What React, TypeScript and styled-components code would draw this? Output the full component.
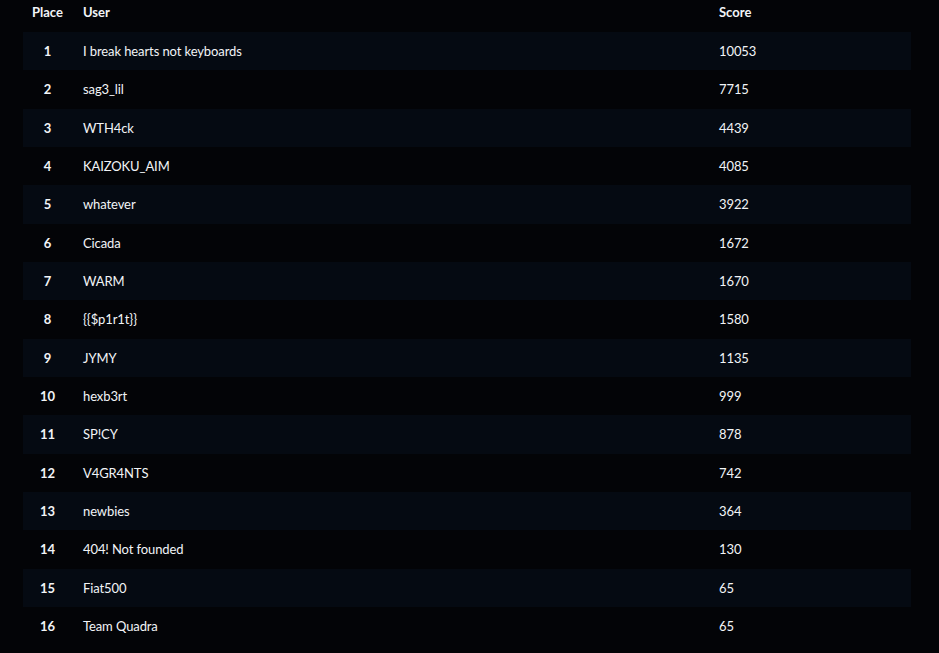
import React from "react";
import styled, { createGlobalStyle } from "styled-components";

const Global = createGlobalStyle`
  html, body { margin: 0; padding: 0; background: #030407; }
  body { font-family: Lato, "Open Sans", sans-serif; color: #f2f4f7; }
`;

const Page = styled.div`
  padding: 0 28px 0 23px;
`;

const Board = styled.div`
  display: grid;
  grid-template-columns: 49px 636px 203px;
  width: 888px;
`;

const HeadCell = styled.div<{ $center?: boolean }>`
  height: 32px;
  box-sizing: border-box;
  padding: 4px 0 0 ${(p) => (p.$center ? 0 : 11)}px;
  line-height: 16px;
  font-size: 13px;
  font-weight: 700;
  text-align: ${(p) => (p.$center ? "center" : "left")};
`;

const Cell = styled.div<{ $striped: boolean; $center?: boolean; $bold?: boolean }>`
  height: 38.33px;
  display: flex;
  align-items: center;
  justify-content: ${(p) => (p.$center ? "center" : "flex-start")};
  padding-left: ${(p) => (p.$center ? 0 : 11)}px;
  background: ${(p) => (p.$striped ? "#050a12" : "transparent")};
  font-size: 13px;
  letter-spacing: -0.1px;
  font-weight: ${(p) => (p.$bold ? 700 : 400)};
`;

const rows: [string, number][] = [
  ["I break hearts not keyboards", 10053],
  ["sag3_lil", 7715],
  ["WTH4ck", 4439],
  ["KAIZOKU_AIM", 4085],
  ["whatever", 3922],
  ["Cicada", 1672],
  ["WARM", 1670],
  ["{{$p1r1t}}", 1580],
  ["JYMY", 1135],
  ["hexb3rt", 999],
  ["SP!CY", 878],
  ["V4GR4NTS", 742],
  ["newbies", 364],
  ["404! Not founded", 130],
  ["Fiat500", 65],
  ["Team Quadra", 65],
];

export default function App() {
  return (
    <Page>
      <Global />
      <Board>
        <HeadCell $center>Place</HeadCell>
        <HeadCell>User</HeadCell>
        <HeadCell>Score</HeadCell>
        {rows.map(([user, score], i) => {
          const s = i % 2 === 0;
          return (
            <React.Fragment key={i}>
              <Cell $striped={s} $center $bold>{i + 1}</Cell>
              <Cell $striped={s}>{user}</Cell>
              <Cell $striped={s}>{score}</Cell>
            </React.Fragment>
          );
        })}
      </Board>
    </Page>
  );
}
